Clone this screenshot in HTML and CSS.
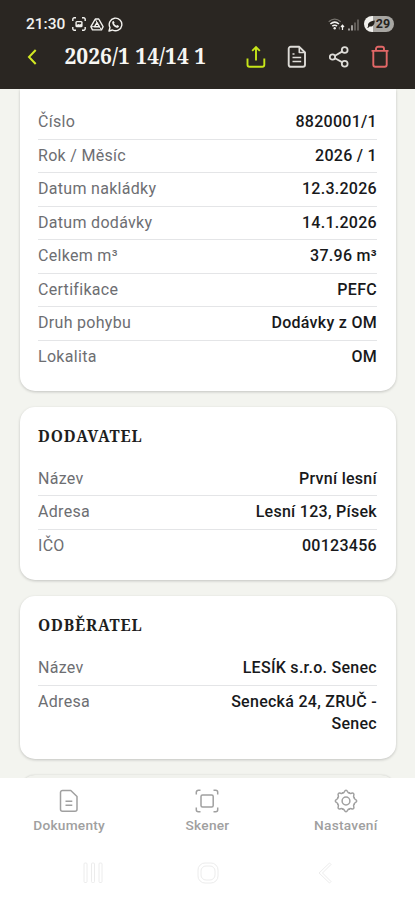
FILE: index.html
```html
<!DOCTYPE html>
<html lang="cs">
<head>
<meta charset="utf-8">
<meta name="viewport" content="width=device-width, initial-scale=1">
<title>2026/1 14/14 1</title>
<link rel="stylesheet" href="styles.css">
</head>
<body>
<div class="app">
  <header class="header">
    <div class="status">
      <span class="clock">21:30</span>
      <svg class="s-icon" width="14" height="14" viewBox="0 0 14 14" fill="none" stroke="currentColor" stroke-width="1.4"><path d="M.8 4V2.300A1.500 1.500 0 0 1 2.300.8H4M10 .8h1.700a1.500 1.500 0 0 1 1.500 1.500V4M13.200 10v1.700a1.500 1.500 0 0 1-1.500 1.500H10M4 13.200H2.300a1.500 1.500 0 0 1-1.500-1.500V10"/><rect x="3.400" y="3.900" width="7.200" height="6.400" rx="1.500" fill="currentColor" stroke="none"/><path d="M4.800 5.200h4.400v1.600l-1.400.6-1.200-.5-1.800.9z" fill="#2a2622" stroke="none"/></svg>
      <svg class="s-icon" width="14" height="13" viewBox="0 0 14 13" fill="none" stroke="currentColor" stroke-width="1.4" stroke-linejoin="round"><path d="M5.300 1h3.400l4.400 7.700-1.600 3.200h-9L.9 8.700z"/><path d="M7 4.600l2.400 4.100H4.600z"/><path d="M5.300 1.200L7 4.600M1 8.700h3.600M9.400 8.700l2 3" stroke-width="1"/></svg>
      <svg class="s-icon" width="15" height="15" viewBox="0 0 15 15" fill="none" stroke="currentColor" stroke-width="1.400"><path d="M1 14l1-3.500A6.300 6.300 0 1 1 4.500 13z" stroke-linejoin="round"/><path d="M4.700 4.200l1-.3.900 1.900-.6.8c.5 1 1.300 1.700 2.300 2.200l.9-.8 1.800.9c0 1.300-1 1.900-2.100 1.800C6.500 10.200 4.100 7.600 4.200 5.200z" fill="currentColor" stroke="none"/></svg>
      <svg class="signal" width="31" height="13" viewBox="0 0 31 13" fill="none"><path d="M.7 3.700q6-5 12 0" stroke="#77736e" stroke-width="1.300"/><path d="M2.400 6q4.300-3.700 8.600 0M4.300 8.200q2.400-2 4.800 0" stroke="#f2f1ee" stroke-width="1.500"/><circle cx="6.700" cy="10.200" r="1.200" fill="#f2f1ee"/><path d="M11.300 11.500V8.800" stroke="#77736e"/><path d="M14.500 12V7.500M13 9l1.500-1.800L16 9" stroke="#f2f1ee" stroke-width="1.200"/><path d="M21 12.500v-2M24 12.500V7.300" stroke="#d4d2cf" stroke-width="1.400"/><path d="M27 12.500V4.500M30 12.500V1.500" stroke="#77736e" stroke-width="1.400"/></svg>
      <span class="battery"><svg width="8" height="8" viewBox="0 0 8 8"><path d="M.3 7.800L1.200 6C.2 3.200 3 1 7.700.4 7.800 4 6 7 2.500 6.500L1 8z" fill="#25221e"/></svg>29</span>
    </div>
    <div class="toolbar">
      <svg class="back" width="10" height="16" viewBox="0 0 10 16" fill="none" stroke="currentColor" stroke-width="2"><path d="M8.700 1L2 8l6.700 7"/></svg>
      <h1 class="title">2026/1 14/14 1</h1>
      <div class="actions">
        <svg class="lime" width="20" height="24" viewBox="0 0 20 24" fill="none" stroke="currentColor" stroke-width="1.900"><path d="M1.500 13.500v6.300a2 2 0 0 0 2 2h12.800a2 2 0 0 0 2-2v-6.300M10 15.500V2.500M6.200 5.800L10 2l3.800 3.800"/></svg>
        <svg class="doc" width="20" height="24" viewBox="0 0 20 24" fill="none" stroke="currentColor" stroke-width="1.900" stroke-linejoin="round"><path d="M3.700 1.800h8.600L18 7.500v12.300a2 2 0 0 1-2 2H3.700a2 2 0 0 1-2-2v-16a2 2 0 0 1 2-2z"/><path d="M12.300 2v5.500H18M5.500 12.500h8.700M5.500 16.500h8.700M5.500 9h2" stroke-width="1.600"/></svg>
        <svg class="share" width="20" height="24" viewBox="0 0 20 24" fill="none" stroke="currentColor" stroke-width="1.800"><circle cx="3.500" cy="12" r="2.700"/><circle cx="15.700" cy="5" r="2.900"/><circle cx="15.700" cy="18.800" r="2.900"/><path d="M6 10.700l7-4.100M6 13.300l7 3.800"/></svg>
        <svg class="trash" width="20" height="24" viewBox="0 0 20 24" fill="none" stroke="currentColor" stroke-width="1.900"><path d="M1.500 5.900h17M3.300 5.900v13.900a2 2 0 0 0 2 2h9.400a2 2 0 0 0 2-2V5.900M6 5.500V3.800a2 2 0 0 1 2-2h4a2 2 0 0 1 2 2v1.700"/></svg>
      </div>
    </div>
  </header>

  <main class="content">
    <section class="card first">
      <dl>
        <div class="row"><dt>Číslo</dt><dd>8820001/1</dd></div>
        <div class="row"><dt>Rok / Měsíc</dt><dd>2026 / 1</dd></div>
        <div class="row"><dt>Datum nakládky</dt><dd>12.3.2026</dd></div>
        <div class="row"><dt>Datum dodávky</dt><dd>14.1.2026</dd></div>
        <div class="row"><dt>Celkem m³</dt><dd>37.96 m³</dd></div>
        <div class="row"><dt>Certifikace</dt><dd>PEFC</dd></div>
        <div class="row"><dt>Druh pohybu</dt><dd>Dodávky z OM</dd></div>
        <div class="row"><dt>Lokalita</dt><dd>OM</dd></div>
      </dl>
    </section>
    <section class="card">
      <h2>DODAVATEL</h2>
      <dl>
        <div class="row"><dt>Název</dt><dd>První lesní</dd></div>
        <div class="row"><dt>Adresa</dt><dd>Lesní 123, Písek</dd></div>
        <div class="row"><dt>IČO</dt><dd>00123456</dd></div>
      </dl>
    </section>
    <section class="card">
      <h2>ODBĚRATEL</h2>
      <dl>
        <div class="row"><dt>Název</dt><dd>LESÍK s.r.o. Senec</dd></div>
        <div class="row"><dt>Adresa</dt><dd>Senecká 24, ZRUČ -<br>Senec</dd></div>
      </dl>
    </section>
    <section class="card next"></section>
  </main>

  <footer class="footer">
    <nav class="tabs">
      <a class="tab">
        <svg width="24" height="24" viewBox="0 0 24 24" fill="none" stroke="currentColor" stroke-width="1.500" stroke-linejoin="round"><path d="M5.500 1.500h8.300l6.200 6v12.800a2 2 0 0 1-2 2H5.500a2 2 0 0 1-2-2V3.500a2 2 0 0 1 2-2z"/><path d="M8.500 12.300h6.800M8.500 16.300h6.800"/></svg>
        <span>Dokumenty</span>
      </a>
      <a class="tab">
        <svg width="24" height="24" viewBox="0 0 24 24" fill="none" stroke="currentColor" stroke-width="1.500"><rect x="6" y="6" width="12.200" height="12" rx="1.500"/><path d="M1.300 5.500V3.300a2 2 0 0 1 2-2h2.200M18.500 1.300h2.200a2 2 0 0 1 2 2v2.200M22.700 18.500v2.200a2 2 0 0 1-2 2h-2.200M5.500 22.700H3.300a2 2 0 0 1-2-2v-2.200"/></svg>
        <span>Skener</span>
      </a>
      <a class="tab">
        <svg width="24" height="24" viewBox="0 0 24 24" fill="none" stroke="currentColor" stroke-width="1.500" stroke-linecap="round">
          <path id="lobe" d="M8.600 3.800C10.700 4.500 10 1.300 12 1.300S13.300 4.500 15.400 3.800"/>
          <use href="#lobe" transform="rotate(45 12 12)"/><use href="#lobe" transform="rotate(90 12 12)"/><use href="#lobe" transform="rotate(135 12 12)"/><use href="#lobe" transform="rotate(180 12 12)"/><use href="#lobe" transform="rotate(225 12 12)"/><use href="#lobe" transform="rotate(270 12 12)"/><use href="#lobe" transform="rotate(315 12 12)"/>
          <circle cx="12" cy="12" r="3.900"/></svg>
        <span>Nastavení</span>
      </a>
    </nav>
    <div class="sysnav">
      <svg width="20" height="22" viewBox="0 0 20 22" fill="none" stroke="currentColor"><rect x="1" y="1" width="3" height="19.500" rx="1"/><rect x="8.500" y="1" width="3" height="19.500" rx="1"/><rect x="16" y="1" width="3" height="19.500" rx="1"/></svg>
      <svg width="22" height="22" viewBox="0 0 22 22" fill="none" stroke="currentColor"><rect x="1" y="1" width="20" height="20" rx="7"/><rect x="4" y="4" width="14" height="14" rx="5"/></svg>
      <svg width="14" height="22" viewBox="0 0 14 22" fill="none" stroke="currentColor"><path d="M11.500 1L1 11l10.500 10 1.500-1.500L4.500 11 13 2.500z"/></svg>
    </div>
  </footer>
</div>
</body>
</html>
```

FILE: styles.css
```css
* { box-sizing: border-box; }
body { margin: 0; font-family: Roboto, "Liberation Sans", sans-serif; }
.app { display: flex; flex-direction: column; height: 900px; overflow: hidden; background: #f3f4ef; }
svg { display: block; flex: none; }

.header { flex: none; height: 88.5px; background: #2a2622; color: #f2f1ee; }
.status { display: flex; align-items: center; height: 33px; padding: 15px 21.5px 0 26px; }
.clock { width: 39px; font-size: 15.5px; font-weight: 500; line-height: 18px; margin-right: 7px; white-space: nowrap; }
.s-icon { margin-right: 4px; }
.signal { margin-left: auto; margin-right: 5px; }
.battery { display: flex; align-items: center; justify-content: center; gap: 1px; width: 30px; height: 16px; border-radius: 8px; background: linear-gradient(90deg, #f2f1ee 29%, #a8a6a2 29%); color: #25221e; font-size: 12.5px; font-weight: 700; line-height: 16px; }

.toolbar { display: flex; align-items: center; height: 47px; padding: 0 25px 0 27px; }
.back { color: #d2e823; }
.title { margin: -2px 0 0 27.5px; font: 700 21px/26px "Noto Serif", "DejaVu Serif", serif; color: #f7f6f3; white-space: nowrap; }
.actions { display: flex; gap: 21.5px; margin-left: auto; }
.lime { color: #c8e619; }
.doc, .share { color: #dedcd8; }
.trash { color: #e26767; }

.content { flex: 1; min-height: 0; overflow: hidden; padding: 0 19.5px; }
.card { margin-bottom: 16px; padding: 18px 18.5px; border-radius: 15px; background: #fff; box-shadow: 0 1px 3px rgba(0, 0, 0, .2); }
.first { padding-top: 17.5px; padding-bottom: 17.5px; border-radius: 0 0 15px 15px; }
.next { height: 40px; background: #f1f2ed; box-shadow: 0 0 2px rgba(0, 0, 0, .16); }
.card h2 { margin: 0 0 15px; font: 700 15.5px/23px "Noto Serif", "DejaVu Serif", serif; letter-spacing: .85px; color: #1e1e1e; }
dl { margin: 0; }
.row { display: flex; justify-content: space-between; padding: 5px 0; border-bottom: 1px solid #e4e5e7; font-size: 16px; line-height: 22.5px; }
.row:last-child { border-bottom: 0; }
dt { color: #6d6e72; letter-spacing: .3px; }
dd { margin: 0; color: #18191b; font-weight: 500; letter-spacing: .28px; text-align: right; }

.footer { flex: none; height: 122.5px; background: #fff; }
.tabs { display: grid; grid-template-columns: repeat(3, 1fr); padding-top: 11px; }
.tab { display: flex; flex-direction: column; align-items: center; gap: 4px; color: #a0a0a0; font-size: 13.7px; font-weight: 500; line-height: 17px; letter-spacing: .25px; }
.sysnav { display: grid; grid-template-columns: 20px 22px 14px; column-gap: 94px; padding: 28px 0 0 83px; color: #ececec; }
.sysnav svg:last-child { margin-left: 5px; }
```
